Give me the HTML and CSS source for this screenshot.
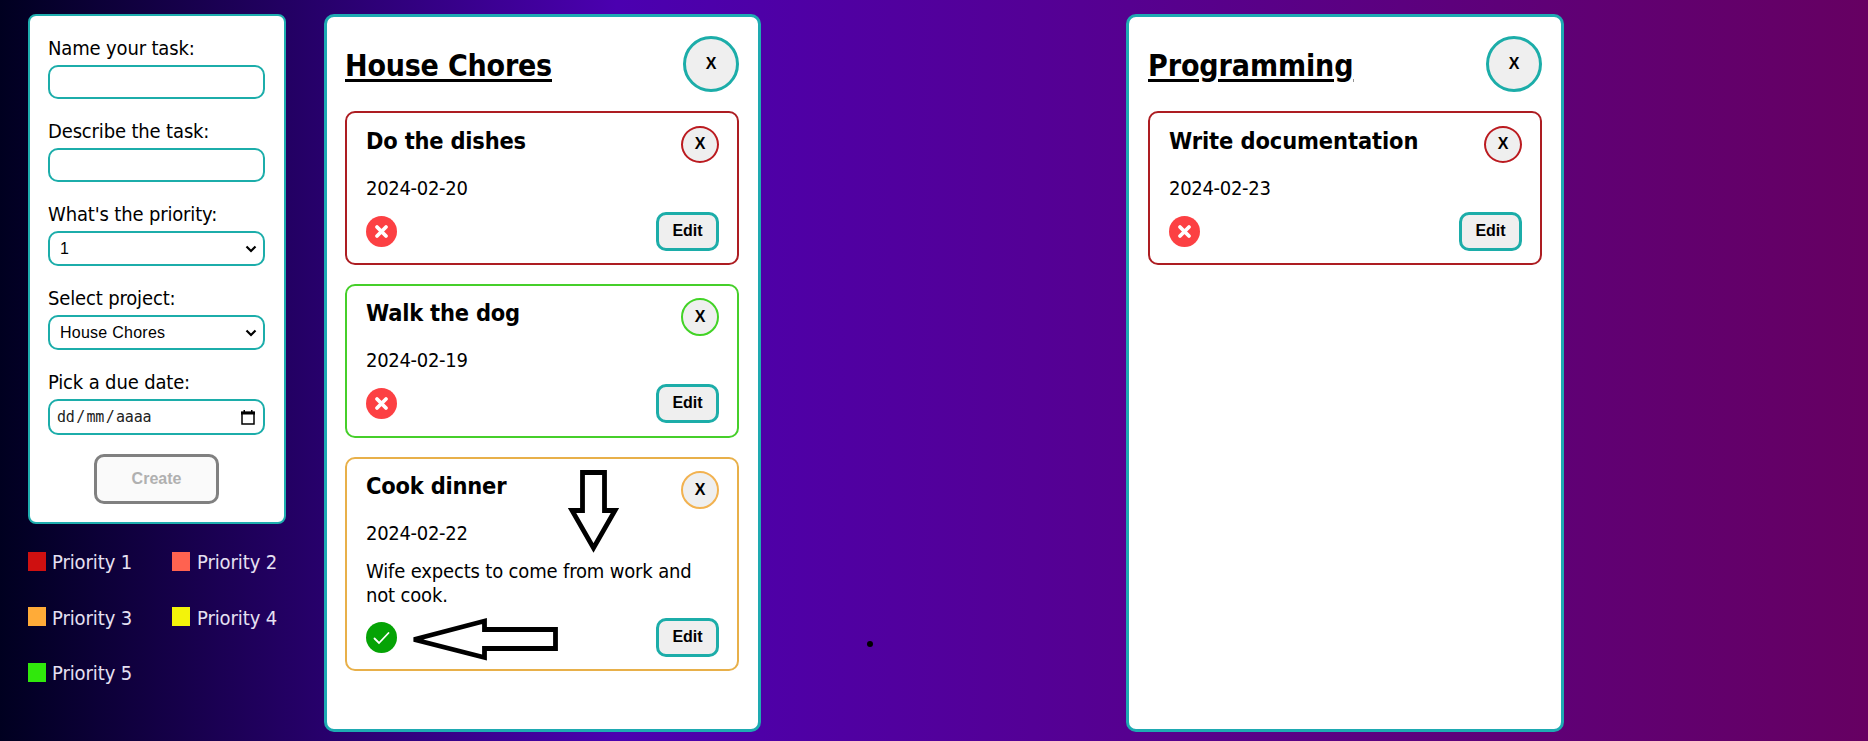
FILE: index.html
```html
<!DOCTYPE html>
<html lang="en">
<head>
<meta charset="utf-8">
<title>Tasks</title>
<link rel="stylesheet" href="styles.css">
</head>
<body>
<aside class="sidebar">
  <form class="task-form">
    <label class="field"><span class="label">Name your task:</span><span class="control"></span></label>
    <label class="field"><span class="label">Describe the task:</span><span class="control"></span></label>
    <label class="field"><span class="label">What's the priority:</span><span class="control select">1<svg class="chevron" viewBox="0 0 12 8"><path d="M1.500 1.500 6 6l4.500-4.500"/></svg></span></label>
    <label class="field"><span class="label">Select project:</span><span class="control select">House Chores<svg class="chevron" viewBox="0 0 12 8"><path d="M1.500 1.500 6 6l4.500-4.500"/></svg></span></label>
    <label class="field"><span class="label">Pick a due date:</span><span class="control date"><span class="date-text"><span>dd</span><span>/</span><span>mm</span><span>/</span><span>aaaa</span></span><svg class="calendar" viewBox="0 0 14 15"><path d="M1 2.500h12v11.500H1z"/><path class="bar" d="M0 1.500h14v3H0zM2.500 0h1.500v2H2.500zM10 0h1.500v2H10z"/></svg></span></label>
    <button class="create" type="button" disabled>Create</button>
  </form>
  <ul class="legend">
    <li><i class="swatch p1"></i>Priority 1</li>
    <li><i class="swatch p2"></i>Priority 2</li>
    <li><i class="swatch p3"></i>Priority 3</li>
    <li><i class="swatch p4"></i>Priority 4</li>
    <li><i class="swatch p5"></i>Priority 5</li>
  </ul>
</aside>
<main class="board">
  <section class="project">
    <header class="project-head"><h2>House Chores</h2><button class="remove-project">X</button></header>
    <article class="task red">
      <div class="task-head"><h3>Do the dishes</h3><button class="remove">X</button></div>
      <p class="due">2024-02-20</p>
      <div class="task-foot"><svg class="status" viewBox="0 0 31 31"><circle class="no" cx="15.500" cy="15.500" r="15.500"/><path class="cross" d="m11 11 9 9m0-9-9 9"/></svg><button class="edit">Edit</button></div>
    </article>
    <article class="task green">
      <div class="task-head"><h3>Walk the dog</h3><button class="remove">X</button></div>
      <p class="due">2024-02-19</p>
      <div class="task-foot"><svg class="status" viewBox="0 0 31 31"><circle class="no" cx="15.500" cy="15.500" r="15.500"/><path class="cross" d="m11 11 9 9m0-9-9 9"/></svg><button class="edit">Edit</button></div>
    </article>
    <article class="task orange">
      <div class="task-head"><h3>Cook dinner</h3><button class="remove">X</button></div>
      <p class="due">2024-02-22</p>
      <p class="details">Wife expects to come from work and<br>not cook.</p>
      <div class="task-foot"><svg class="status" viewBox="0 0 31 31"><circle class="yes" cx="15.500" cy="15.500" r="15.500"/><path class="check" d="m8.500 16.500 4.500 4.500 9.500-10"/></svg><button class="edit">Edit</button></div>
    </article>
  </section>
  <section class="project programming">
    <header class="project-head"><h2>Programming</h2><button class="remove-project">X</button></header>
    <article class="task red">
      <div class="task-head"><h3>Write documentation</h3><button class="remove">X</button></div>
      <p class="due">2024-02-23</p>
      <div class="task-foot"><svg class="status" viewBox="0 0 31 31"><circle class="no" cx="15.500" cy="15.500" r="15.500"/><path class="cross" d="m11 11 9 9m0-9-9 9"/></svg><button class="edit">Edit</button></div>
    </article>
  </section>
</main>
<svg class="marks" viewBox="0 0 1868 741">
  <path d="M582.500 472.500h22v38h10.500l-21.500 37.500-21.500-37.500h10.500z"/>
  <path d="M414 639.500 484.500 621v8.500h71v19h-71v9z"/>
  <circle cx="870" cy="644" r="3"/>
</svg>
</body>
</html>
```
FILE: styles.css
```css
* { box-sizing: border-box; margin: 0; padding: 0; }
body {
  width: 1868px; height: 741px; overflow: hidden;
  display: grid; grid-template-columns: 258px 1fr; column-gap: 38px;
  padding: 14px 28px 9px;
  font: 20px/24px "DejaVu Sans Condensed", "DejaVu Sans", sans-serif;
  font-stretch: condensed;
  letter-spacing: -0.2px;
  color: #000;
  background: linear-gradient(90deg, #000020 0%, #4b00b0 33%, #660062 100%);
}
button { font: bold 16px/18px "Liberation Sans", Arial, sans-serif; background: #efefef; color: #000; }
.task-form {
  height: 510px; padding: 20px 19px 0 18px;
  display: flex; flex-direction: column;
  background: #fff; border: 2px solid #1eadae; border-radius: 8px;
}
.field { display: block; margin-bottom: 20px; }
.label { display: block; height: 29px; line-height: 24px; white-space: nowrap; letter-spacing: -0.150px; }
.control {
  display: flex; align-items: center; justify-content: space-between;
  width: 217px; height: 34px; padding: 0 6px 0 10px;
  border: 2px solid #1cadaa; border-radius: 10px;
  font: 16px/18px "Liberation Sans", Arial, sans-serif; letter-spacing: 0.250px;
}
.control.select { height: 35px; }
.chevron { width: 12px; height: 8px; fill: none; stroke: #000; stroke-width: 2.200; }
.control.date { height: 36px; padding: 0 8px 0 7px; font: 15px/18px "DejaVu Sans Mono", monospace; letter-spacing: -0.2px; color: #222; }
.date-text { display: flex; gap: 1.500px; }
.calendar { width: 14px; height: 15px; fill: none; stroke: #000; stroke-width: 1.500; }
.calendar .bar { fill: #000; stroke: none; }
.create {
  width: 125px; height: 50px; margin: -1px auto 0; padding-bottom: 1px;
  border: 3px solid #808080; border-radius: 10px; background: #fafafa; color: #b0b0b0;
}
.legend {
  list-style: none; margin-top: 26px; color: #e6e0f2; letter-spacing: -0.1px;
  display: grid; grid-template-columns: 144px 114px; grid-auto-rows: 55.500px;
}
.legend li { display: flex; align-items: center; gap: 6px; height: 24px; white-space: nowrap; }
.legend li:nth-child(even) { gap: 7px; }
.swatch { width: 18px; height: 19px; margin-top: -2px; flex: none; }
.p1 { background: #cf1010; } .p2 { background: #ff6250; } .p3 { background: #ffab38; }
.p4 { background: #f3f30a; } .p5 { background: #30e80c; }
.board { display: grid; grid-template-columns: 437px 438px; column-gap: 365px; }
.project { height: 718px; padding: 19px 19px 0 18px; background: #fff; border: 3px solid #1eaab2; border-radius: 10px; }
.programming { padding-left: 19px; }
.project-head { display: flex; justify-content: space-between; align-items: center; height: 56px; margin-bottom: 19px; }
.project-head h2 { font-size: 30px; line-height: 36px; padding-top: 4px; text-decoration: underline; text-decoration-thickness: 3px; text-underline-offset: 3px; letter-spacing: -0.2px; }
.programming .project-head h2 { letter-spacing: -0.1px; }
.remove-project { width: 56px; height: 56px; border: 3px solid #1cada9; border-radius: 50%; }
.task { height: 154px; margin-bottom: 19px; padding: 12px 18px 0 19px; border: 2px solid; border-radius: 10px; }
.red { border-color: #ad1d22; } .green { border-color: #46cf2a; } .orange { border-color: #e8b04a; }
.orange { height: 214px; }
.task-head { display: flex; justify-content: space-between; height: 50px; }
.red .task-head { height: 51px; }
.task-head h3 { font-size: 23.400px; line-height: 29px; padding-top: 1px; }
.red h3 { padding-top: 2px; }
.programming h3 { letter-spacing: -0.1px; }
.remove { width: 38px; height: 38px; padding-bottom: 1px; border: 2px solid; border-radius: 50%; }
.red .remove { margin-top: 1px; height: 37px; border-color: #bb1b20; } .green .remove { border-color: #42d326; } .orange .remove { border-color: #f2b250; }
.due { height: 36px; letter-spacing: -0.3px; }
.details { height: 61px; padding-top: 2px; letter-spacing: -0.160px; }
.task-foot { display: flex; justify-content: space-between; align-items: center; height: 39px; }
.status { width: 31px; height: 31px; }
.no { fill: #fc4043; } .yes { fill: #05a305; }
.cross { fill: none; stroke: #fff; stroke-width: 3.800; stroke-linecap: round; }
.check { fill: none; stroke: #fff; stroke-width: 1.800; stroke-linecap: round; }
.edit { width: 63px; height: 39px; padding-bottom: 2px; border: 3px solid #1cada9; border-radius: 10px; }
.marks { position: absolute; left: 0; top: 0; width: 1868px; height: 741px; fill: none; stroke: #000; stroke-width: 4.800; stroke-miterlimit: 3; pointer-events: none; }
.marks circle { fill: #000; stroke: none; }
```
